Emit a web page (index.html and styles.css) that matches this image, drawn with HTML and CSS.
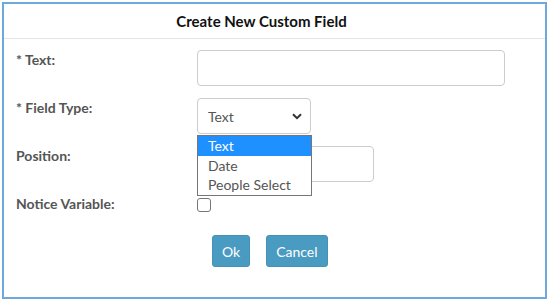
FILE: index.html
```html
<!DOCTYPE html>
<html>
<head>
<meta charset="utf-8">
<link rel="stylesheet" href="styles.css">
</head>
<body>
<div class="dialog">
  <div class="header">Create New Custom Field</div>
  <div class="body">
    <div class="form">
      <div class="label">* Text:</div>
      <div class="field"><div class="input wide"></div></div>
      <div class="label">* Field Type:</div>
      <div class="field">
        <div class="select-wrap">
          <div class="select">
            <span>Text</span>
            <svg class="chev" width="10" height="7" viewBox="0 0 10 7"><path d="M1 1.2 L5 5.2 L9 1.2" fill="none" stroke="#333" stroke-width="2"/></svg>
          </div>
          <ul class="options">
            <li class="opt active">Text</li>
            <li class="opt">Date</li>
            <li class="opt">People Select</li>
          </ul>
        </div>
      </div>
      <div class="label">Position:</div>
      <div class="field"><div class="input mid"></div></div>
      <div class="label label-check">Notice Variable:</div>
      <div class="field field-check"><span class="checkbox"></span></div>
    </div>
    <div class="actions">
      <button class="btn">Ok</button>
      <button class="btn">Cancel</button>
    </div>
  </div>
</div>
</body>
</html>
```
FILE: styles.css
```css
* { box-sizing: border-box; }
html, body { margin: 0; padding: 0; background: #fff; }
body { font-family: Lato, "Open Sans", sans-serif; color: #555; }
.dialog {
  margin: 2px 3px 0 2px;
  width: 545px;
  height: 297px;
  border: 2px solid #6fa8dc;
  background: #fff;
}
.header {
  height: 35px;
  border-bottom: 1px solid #e5e5e5;
  text-align: center;
  font-weight: bold;
  font-size: 15px;
  color: #111;
  line-height: 34px;
  padding-right: 26px;
}
.body { padding: 11px 0 0 12px; }
.form {
  display: grid;
  grid-template-columns: 181px 1fr;
  row-gap: 12px;
}
.label {
  font-weight: bold;
  font-size: 14px;
  line-height: 18px;
  padding-top: 1px;
}
.input {
  height: 36px;
  border: 1px solid #ccc;
  border-radius: 4px;
  background: #fff;
}
.wide { width: 308px; }
.mid { width: 177px; }
.select-wrap { position: relative; width: 115px; }
.select {
  height: 36px;
  width: 114px;
  border: 1px solid #ccc;
  border-radius: 4px;
  display: flex;
  align-items: center;
  justify-content: space-between;
  padding: 0 8px 0 10px;
  font-size: 14px;
  color: #555;
}
.chev { display: block; }
.options {
  position: absolute;
  left: 0;
  top: 37px;
  width: 115px;
  margin: 0;
  padding: 0;
  list-style: none;
  border: 1px solid #767676;
  background: #fff;
  z-index: 2;
}
.opt {
  height: 19.5px;
  line-height: 19px;
  padding-left: 10px;
  font-size: 14px;
  color: #555;
}
.opt.active { background: #1e90ff; color: #fff; }
.label-check { padding-top: 0; margin-top: 1px; }
.field-check { padding-top: 0; margin-top: 4px; }
.checkbox {
  display: block;
  width: 14px;
  height: 14px;
  border: 1px solid #767676;
  border-radius: 3px;
  background: #fff;
}
.actions {
  display: flex;
  gap: 16px;
  padding-left: 196px;
  margin-top: 22px;
}
.btn {
  height: 32px;
  padding: 0 9px;
  border: 1px solid #4592b5;
  border-radius: 3px;
  background: #4a9bc1;
  color: #fff;
  font-family: Lato, "Open Sans", sans-serif;
  font-size: 14px;
}
```
